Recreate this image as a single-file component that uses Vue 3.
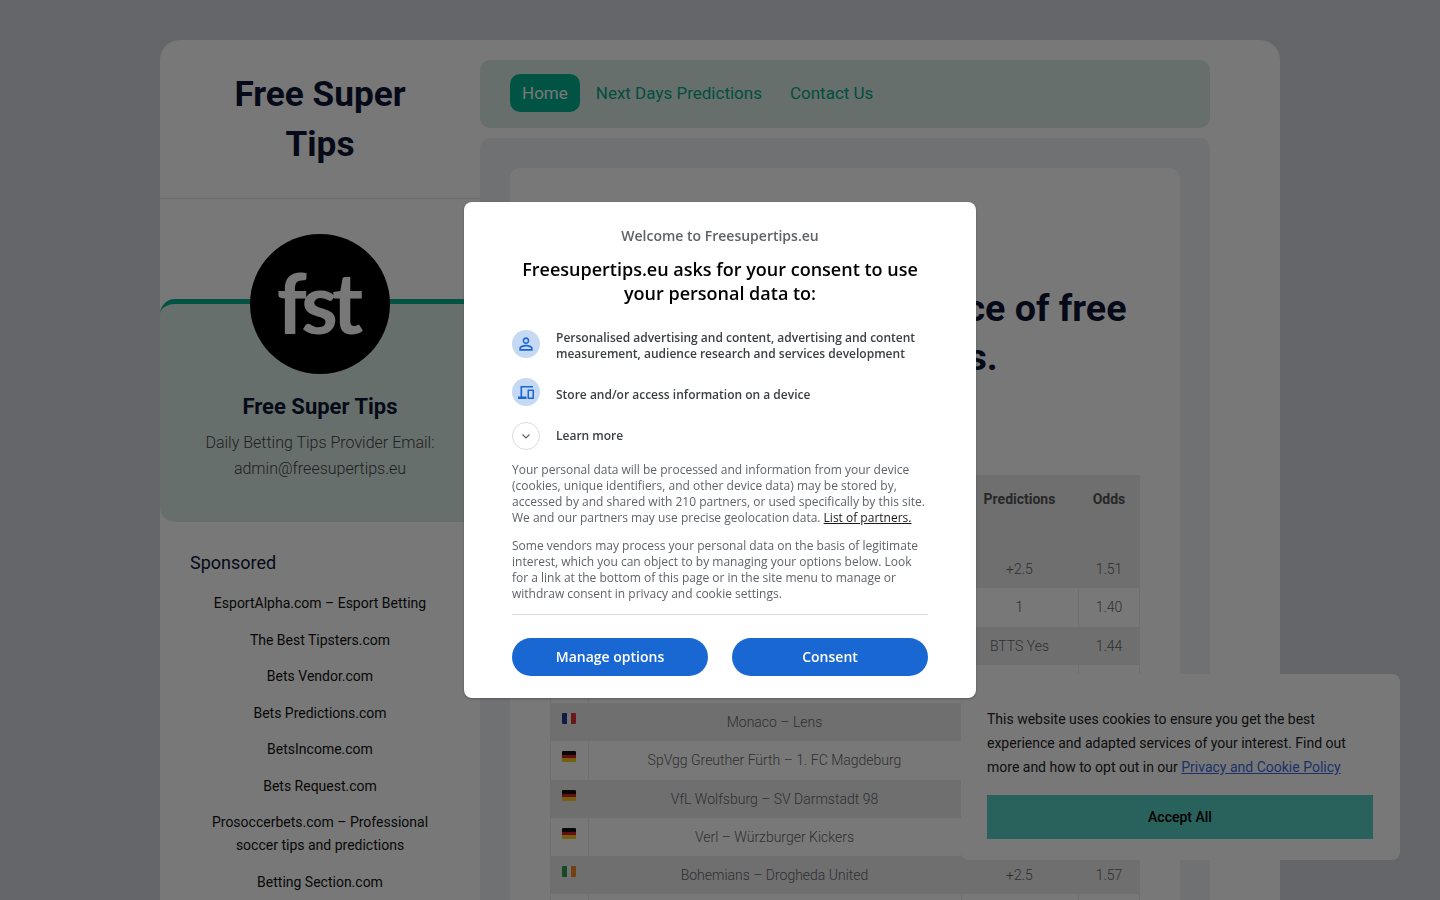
<script setup>
const links = [
  "EsportAlpha.com – Esport Betting",
  "The Best Tipsters.com",
  "Bets Vendor.com",
  "Bets Predictions.com",
  "BetsIncome.com",
  "Bets Request.com",
  "Prosoccerbets.com – Professional soccer tips and predictions",
  "Betting Section.com",
  "Soccer Tips.com",
];

const rows = [
  { flag: "de", match: "Hamburg – Bremen", pick: "+2.5", odds: "1.51" },
  { flag: "fr", match: "Paris SG – Nantes", pick: "1", odds: "1.40" },
  { flag: "de", match: "Dortmund – Koln", pick: "BTTS Yes", odds: "1.44" },
  { flag: "fr", match: "Lyon – Nice", pick: "+1.5", odds: "1.35" },
  { flag: "fr", match: "Monaco – Lens", pick: "+2.5", odds: "1.50" },
  { flag: "de", match: "SpVgg Greuther Fürth – 1. FC Magdeburg", pick: "+2.5", odds: "1.48" },
  { flag: "de", match: "VfL Wolfsburg – SV Darmstadt 98", pick: "1", odds: "1.55" },
  { flag: "de", match: "Verl – Würzburger Kickers", pick: "+1.5", odds: "1.30" },
  { flag: "ie", match: "Bohemians – Drogheda United", pick: "+2.5", odds: "1.57" },
  { flag: "ie", match: "Shelbourne – Derry City", pick: "1", odds: "1.62" },
];
</script>

<template>
  <div class="page">
    <div class="shell">
      <aside class="sidebar">
        <div class="brand">Free Super Tips</div>
        <div class="profile">
          <div class="avatar"><span>fst</span></div>
          <h3>Free Super Tips</h3>
          <p>Daily Betting Tips Provider Email: admin@freesupertips.eu</p>
        </div>
        <div class="sponsored">
          <h4>Sponsored</h4>
          <a v-for="link in links" :key="link" href="#">{{ link }}</a>
        </div>
      </aside>

      <main class="main">
        <nav class="nav">
          <a class="active" href="#">Home</a>
          <a href="#">Next Days Predictions</a>
          <a href="#">Contact Us</a>
        </nav>
        <div class="content">
          <div class="card">
            <h1>Our top daily tested source of free<br />Football Odds Predictions.</h1>
            <table>
              <thead>
                <tr>
                  <th></th>
                  <th>Match</th>
                  <th>Predictions</th>
                  <th>Odds</th>
                </tr>
              </thead>
              <tbody>
                <tr v-for="row in rows" :key="row.match">
                  <td class="flag-cell"><i class="flag" :class="row.flag"></i></td>
                  <td>{{ row.match }}</td>
                  <td>{{ row.pick }}</td>
                  <td>{{ row.odds }}</td>
                </tr>
              </tbody>
            </table>
          </div>
        </div>
      </main>
    </div>

    <div class="cookie">
      <p>
        This website uses cookies to ensure you get the best experience and adapted services of your
        interest. Find out more and how to opt out in our
        <a href="#">Privacy and Cookie Policy</a>
      </p>
      <button type="button">Accept All</button>
    </div>

    <div class="overlay">
      <div class="dialog">
        <div class="welcome">Welcome to Freesupertips.eu</div>
        <h2>Freesupertips.eu asks for your consent to use your personal data to:</h2>

        <div class="purpose first">
          <span class="badge">
            <svg viewBox="0 0 24 24" width="20" height="20">
              <path d="M12 5.9c1.16 0 2.1.94 2.1 2.1s-.94 2.1-2.1 2.1S9.9 9.16 9.9 8s.94-2.1 2.1-2.1m0 9c2.97 0 6.1 1.46 6.1 2.1v1.1H5.9V17c0-.64 3.13-2.1 6.1-2.1M12 4C9.79 4 8 5.79 8 8s1.79 4 4 4 4-1.79 4-4-1.79-4-4-4zm0 9c-2.67 0-8 1.34-8 4v3h16v-3c0-2.66-5.33-4-8-4z" />
            </svg>
          </span>
          <span class="label">Personalised advertising and content, advertising and content measurement, audience research and services development</span>
        </div>

        <div class="purpose second">
          <span class="badge">
            <svg viewBox="0 0 16 13" width="16" height="13">
              <path d="M2.5 0H15v1.6H4.1v8.8H8.5V13H0v-2.6h2.5V0z" />
              <path fill-rule="evenodd" d="M10.5 3.5H15c.55 0 1 .45 1 1V12c0 .55-.45 1-1 1h-4.5c-.55 0-1-.45-1-1V4.5c0-.55.45-1 1-1zM11 5v6.5h3.5V5H11z" />
            </svg>
          </span>
          <span class="label">Store and/or access information on a device</span>
        </div>

        <div class="purpose third">
          <span class="badge plain">
            <svg viewBox="0 0 12 12" width="12" height="12">
              <polyline points="2.5,4.5 6,8 9.5,4.5" />
            </svg>
          </span>
          <span class="label">Learn more</span>
        </div>

        <p class="copy">
          Your personal data will be processed and information from your device (cookies, unique
          identifiers, and other device data) may be stored by, accessed by and shared with 210
          partners, or used specifically by this site. We and our partners may use precise
          geolocation data. <a href="#">List of partners.</a>
        </p>
        <p class="copy">
          Some vendors may process your personal data on the basis of legitimate interest, which you
          can object to by managing your options below. Look for a link at the bottom of this page or
          in the site menu to manage or withdraw consent in privacy and cookie settings.
        </p>

        <div class="actions">
          <button type="button">Manage options</button>
          <button type="button">Consent</button>
        </div>
      </div>
    </div>
  </div>
</template>

<style>
html,
body {
  overflow: hidden;
  height: 100%;
}
</style>

<style scoped>
.page {
  height: 900px;
  overflow: hidden;
  background: #d4d9e2;
  font-family: Roboto, "Liberation Sans", sans-serif;
}

.shell {
  display: flex;
  width: 1120px;
  margin: 40px auto 0;
  background: #fff;
  border-radius: 20px 20px 0 0;
  min-height: 1000px;
}

.sidebar {
  width: 320px;
  flex-shrink: 0;
}

.brand {
  height: 159px;
  box-sizing: border-box;
  padding: 29px 60px 0;
  border-bottom: 1px solid #e2e2e2;
  text-align: center;
  font-size: 35.2px;
  font-weight: 700;
  line-height: 50px;
  color: #0b1533;
}

.profile {
  position: relative;
  margin-top: 100px;
  height: 223px;
  box-sizing: border-box;
  padding-top: 88px;
  background: #dcece8;
  border-top: 5px solid #04b08f;
  border-radius: 15px;
  text-align: center;
  margin-right: -16px;
  padding-right: 16px;
}

.avatar {
  position: absolute;
  top: -70px;
  left: 90px;
  width: 140px;
  height: 140px;
  border-radius: 50%;
  background: #000;
  display: flex;
  align-items: center;
  justify-content: center;
}

.avatar span {
  font-family: Lato, sans-serif;
  font-size: 84px;
  font-weight: 700;
  letter-spacing: -6px;
  line-height: 1;
  color: #fff;
  margin: -5px 0 0 -6px;
}

.profile h3 {
  margin: 0 0 8px;
  font-size: 22px;
  font-weight: 700;
  line-height: 30px;
  color: #0b1533;
}

.profile p {
  margin: 0 auto;
  width: 260px;
  font-size: 16px;
  font-weight: 300;
  line-height: 26px;
  color: #444;
}

.sponsored {
  padding: 28px 30px 0;
}

.sponsored h4 {
  margin: 0 0 16px;
  font-size: 18px;
  font-weight: 400;
  line-height: 26px;
  color: #0b1533;
}

.sponsored a {
  display: block;
  margin-bottom: 13.5px;
  text-align: center;
  font-size: 14px;
  line-height: 23px;
  color: #111;
  text-decoration: none;
}

.main {
  width: 730px;
  padding-top: 20px;
}

.nav {
  display: flex;
  align-items: center;
  gap: 4px;
  height: 68px;
  box-sizing: border-box;
  padding: 0 0 2px 30px;
  background: #dcece8;
  border-radius: 10px;
}

.nav a {
  padding: 0 12px;
  height: 38px;
  display: flex;
  align-items: center;
  font-size: 17px;
  color: #04a585;
  text-decoration: none;
  border-radius: 10px;
}

.nav a.active {
  background: #04b08f;
  color: #fff;
}

.content {
  margin-top: 10px;
  padding: 30px 30px 0;
  background: #eff0f3;
  border-radius: 10px 10px 0 0;
}

.card {
  background: #fff;
  border-radius: 10px 10px 0 0;
  padding: 40px;
  height: 900px;
  box-sizing: border-box;
}

h1 {
  margin: 76px 0 93px;
  font-size: 37.7px;
  font-weight: 700;
  line-height: 49px;
  color: #0b1533;
  white-space: nowrap;
}

table {
  width: 590px;
  table-layout: fixed;
  border-collapse: collapse;
  font-size: 14px;
  color: #666;
}

th:nth-child(1) {
  width: 38px;
}

th:nth-child(3) {
  width: 117px;
}

th:nth-child(4) {
  width: 62px;
}

thead tr {
  background: #ebebef;
}

th {
  height: 75px;
  box-sizing: border-box;
  padding: 14px 0 0;
  vertical-align: top;
  font-weight: 700;
  line-height: 20px;
  color: #555;
}

td {
  padding: 8px 0;
  line-height: 22.25px;
  font-weight: 300;
  text-align: center;
}

tbody tr:nth-child(odd) {
  background: #ebebef;
}

tbody tr:nth-child(even) td {
  box-shadow: inset 1px 0 0 #ebebef;
}

tbody tr:nth-child(even) td:last-child {
  box-shadow: inset 1px 0 0 #ebebef, inset -1px 0 0 #ebebef;
}

.flag-cell {
  padding: 0;
  vertical-align: top;
}

.flag {
  display: block;
  width: 14px;
  height: 11px;
  margin: 10px auto 0;
  border-radius: 1px;
}

.flag.fr {
  background: linear-gradient(90deg, #24408e 33%, #f4f4f4 33% 66%, #e2343c 66%);
}

.flag.de {
  background: linear-gradient(180deg, #111 33%, #d5202a 33% 66%, #f7c91c 66%);
}

.flag.ie {
  background: linear-gradient(90deg, #2f9e4f 33%, #f4f4f4 33% 66%, #f08a24 66%);
}

.cookie {
  position: fixed;
  right: 40px;
  bottom: 40px;
  width: 439px;
  height: 186px;
  box-sizing: border-box;
  padding: 33px 27px 0 26px;
  background: #fff;
  border-radius: 8px;
}

.cookie p {
  margin: 0 0 16px;
  font-size: 14px;
  line-height: 24px;
  color: #222;
}

.cookie a {
  color: #3b6ae0;
}

.cookie button {
  display: block;
  width: 100%;
  height: 44px;
  border: 0;
  background: #58cfc3;
  font-family: inherit;
  font-size: 14px;
  font-weight: 500;
  color: #000;
}

.overlay {
  position: fixed;
  inset: 0;
  display: flex;
  align-items: center;
  justify-content: center;
  background: rgba(0, 0, 0, 0.53);
}

.dialog {
  width: 512px;
  height: 496px;
  box-sizing: border-box;
  padding: 24px 48px 0;
  background: #fff;
  border-radius: 8px;
  box-shadow: 0 1px 3px rgba(60, 64, 67, 0.5);
  font-family: "Open Sans", sans-serif;
}

.welcome {
  text-align: center;
  font-size: 14px;
  font-weight: 600;
  line-height: 20px;
  color: #5f6368;
}

h2 {
  margin: 11px 0 25px;
  text-align: center;
  font-size: 18px;
  font-weight: 600;
  line-height: 24px;
  color: #000;
}

.purpose {
  display: flex;
  gap: 16px;
  align-items: flex-start;
}

.purpose.second {
  margin-top: 16px;
}

.purpose.third {
  margin-top: 16px;
  margin-bottom: 12px;
}

.purpose.second .label,
.purpose.third .label {
  align-self: center;
}

.purpose.second .label {
  padding-top: 6px;
}

.badge {
  width: 28px;
  height: 28px;
  flex-shrink: 0;
  display: flex;
  align-items: center;
  justify-content: center;
  border-radius: 50%;
  background: #c5d9f4;
}

.badge svg {
  fill: #1967d2;
}

.badge.plain {
  background: #fff;
  border: 1px solid #dadce0;
  box-sizing: border-box;
}

.badge.plain svg {
  fill: none;
  stroke: #5f6368;
  stroke-width: 1.2;
}

.label {
  font-size: 12px;
  font-weight: 600;
  line-height: 16px;
  color: #3c4043;
}

.copy {
  margin: 0 0 12px;
  font-size: 12px;
  line-height: 16px;
  color: #5f6368;
}

.copy a {
  color: #1a1a1a;
}

.actions {
  display: flex;
  gap: 24px;
  margin-top: 12px;
  padding-top: 23px;
  border-top: 1px solid #dadce0;
}

.actions button {
  flex: 1;
  height: 38px;
  padding: 0 0 2px;
  border: 0;
  border-radius: 19px;
  background: #1967d2;
  font-family: inherit;
  font-size: 14px;
  font-weight: 600;
  color: #fff;
}
</style>
